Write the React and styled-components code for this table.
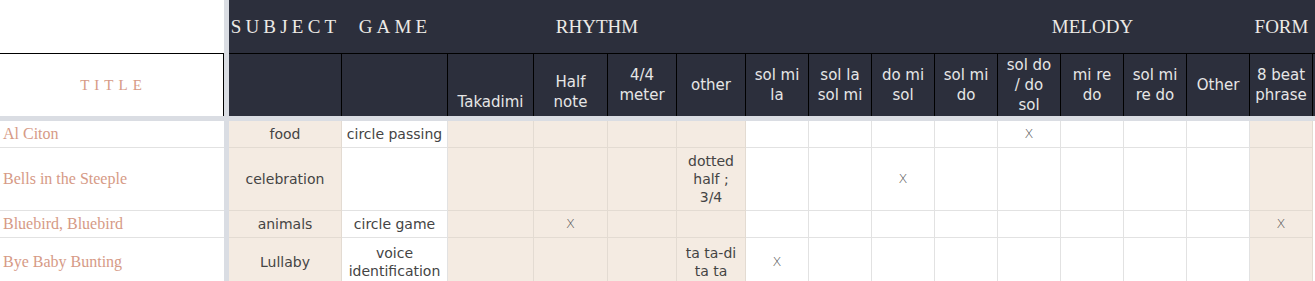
import React from "react";
import styled, { createGlobalStyle, css } from "styled-components";

const GlobalStyle = createGlobalStyle`
  html, body {
    margin: 0;
    padding: 0;
    background: #ffffff;
    overflow: hidden;
  }
`;

const DARK = "#2c2f3c";
const BEIGE = "#f4ebe2";
const FREEZE = "#dadde3";
const SALMON = "#d69a86";

const columns = [
  { key: "subject", beige: true },
  { key: "game" },
  { key: "takadimi", label: "Takadimi", bottom: true, beige: true },
  { key: "half", label: "Half note", bottom: true, beige: true },
  { key: "meter", label: "4/4 meter", beige: true },
  { key: "other", label: "other", beige: true },
  { key: "sml", label: "sol mi la" },
  { key: "slsm", label: "sol la sol mi" },
  { key: "dms", label: "do mi sol" },
  { key: "smd", label: "sol mi do" },
  { key: "sdds", label: "sol do / do sol" },
  { key: "mrd", label: "mi re do" },
  { key: "smrd", label: "sol mi re do" },
  { key: "mOther", label: "Other" },
  { key: "phrase", label: "8 beat phrase", beige: true },
];

const rows = [
  { title: "Al Citon", subject: "food", game: "circle passing", sdds: "X" },
  {
    title: "Bells in the Steeple",
    subject: "celebration",
    other: "dotted half ; 3/4",
    dms: "X",
  },
  {
    title: "Bluebird, Bluebird",
    subject: "animals",
    game: "circle game",
    half: "X",
    phrase: "X",
  },
  {
    title: "Bye Baby Bunting",
    subject: "Lullaby",
    game: "voice identification",
    other: "ta ta-di ta ta",
    sml: "X",
  },
];

const Sheet = styled.div`
  display: grid;
  grid-template-columns: 224px 5px 113px 106px 86px 74px 69px 69px repeat(9, 63px) 2px;
  grid-template-rows: 53px 63px 5px 27px 63px 27px 48px;
  width: 1315px;
  height: 281px;
  overflow: hidden;
`;

const FreezeCol = styled.div`
  grid-column: 2;
  grid-row: 1 / -1;
  background: ${FREEZE};
`;

const FreezeRow = styled.div`
  grid-column: 1 / -1;
  grid-row: 3;
  background: ${FREEZE};
`;

const TopBlank = styled.div`
  background: #ffffff;
`;

const Band = styled.div`
  grid-column: span ${(p) => p.$span || 1};
  background: ${DARK};
  color: #eceae6;
  font-family: "Liberation Serif", "DejaVu Serif", serif;
  font-size: 19px;
  letter-spacing: ${(p) => (p.$spaced ? "4.2px" : "0")};
  display: flex;
  align-items: center;
  justify-content: center;
  padding-top: 1px;
`;

const TitleHead = styled.div`
  background: #ffffff;
  border-top: 1px solid #000;
  border-right: 1px solid #000;
  color: ${SALMON};
  font-family: "Liberation Serif", "DejaVu Serif", serif;
  font-size: 15px;
  letter-spacing: 5px;
  display: flex;
  align-items: center;
  justify-content: center;
  padding-left: 4px;
`;

const HeadCell = styled.div`
  background: ${DARK};
  border-top: 1px solid #000;
  border-right: 1px solid #000;
  color: #e6e6e6;
  font-family: "DejaVu Sans", "Liberation Sans", sans-serif;
  font-size: 15px;
  line-height: 20px;
  text-align: center;
  display: flex;
  justify-content: center;
  align-items: ${(p) => (p.$bottom ? "flex-end" : "center")};
  padding: 0 5px ${(p) => (p.$bottom ? "4px" : "0")};
  box-sizing: border-box;
`;

const Edge = styled.div`
  background: ${(p) => (p.$dark ? DARK : "#ffffff")};
  ${(p) =>
    p.$dark &&
    css`
      border-top: ${p.$line ? "1px solid #000" : "0"};
    `}
`;

const TitleCell = styled.div`
  background: #ffffff;
  border-bottom: 1px solid #e2e2e2;
  color: ${SALMON};
  font-family: "Liberation Serif", "DejaVu Serif", serif;
  font-size: 16px;
  display: flex;
  align-items: center;
  padding-left: 3px;
`;

const Cell = styled.div`
  background: ${(p) => (p.$beige ? BEIGE : "#ffffff")};
  border-right: 1px solid ${(p) => (p.$beige ? "#e3dbd2" : "#e2e2e2")};
  border-bottom: 1px solid ${(p) => (p.$beige ? "#e3dbd2" : "#e2e2e2")};
  color: ${(p) => (p.$mark ? "#555" : "#444")};
  font-family: "DejaVu Sans", "Liberation Sans", sans-serif;
  font-size: ${(p) => (p.$mark ? "13px" : "14px")};
  font-weight: ${(p) => (p.$mark ? 300 : 400)};
  line-height: 18px;
  text-align: center;
  display: flex;
  align-items: center;
  justify-content: center;
  padding: 0 3px;
  box-sizing: border-box;
  overflow: hidden;
`;

export default function App() {
  return (
    <>
      <GlobalStyle />
      <Sheet>
        <FreezeCol />
        <FreezeRow />

        <TopBlank />
        <Band $spaced>SUBJECT</Band>
        <Band $spaced>GAME</Band>
        <Band $span={4}>RHYTHM</Band>
        <Band $span={3} />
        <Band $span={5}>MELODY</Band>
        <Band>FORM</Band>
        <Edge $dark />

        <TitleHead>TITLE</TitleHead>
        {columns.map((c) => (
          <HeadCell key={c.key} $bottom={c.bottom}>
            {c.label}
          </HeadCell>
        ))}
        <Edge $dark $line />

        {rows.map((r) => (
          <React.Fragment key={r.title}>
            <TitleCell>{r.title}</TitleCell>
            {columns.map((c) => (
              <Cell key={c.key} $beige={c.beige} $mark={r[c.key] === "X"}>
                {r[c.key]}
              </Cell>
            ))}
            <Edge />
          </React.Fragment>
        ))}
      </Sheet>
    </>
  );
}
